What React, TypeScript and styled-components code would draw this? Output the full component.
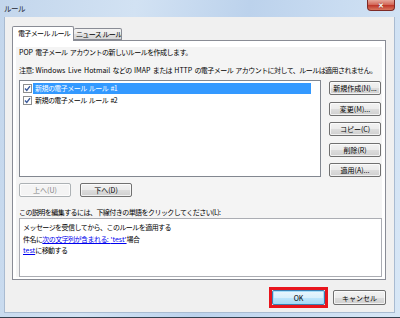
import styled, { createGlobalStyle } from "styled-components";

const GlobalStyle = createGlobalStyle`
  html, body {
    margin: 0;
    padding: 0;
    background: #ffffff;
  }
  body {
    font-family: "Noto Sans CJK JP", "Noto Sans", sans-serif;
  }
`;

const rules = [
  { id: 1, name: "新規の電子メール ルール #1", selected: true },
  { id: 2, name: "新規の電子メール ルール #2", selected: false },
];

const sideButtons = ["新規作成(N)...", "変更(M)...", "コピー(C)", "削除(R)", "適用(A)..."];

const CheckIcon = () => (
  <svg width="9" height="9" viewBox="0 0 9 9">
    <rect x="0.5" y="0.5" width="8" height="8" fill="#fff" stroke="#8e8f8f" />
    <path d="M2 4.5 L3.8 6.4 L7 2.2" fill="none" stroke="#3b5a9a" strokeWidth="1.4" />
  </svg>
);

const App = () => {
  return (
    <>
      <GlobalStyle />
      <Window>
        <TitleBar>
          <Title>ルール</Title>
          <CloseButton>✕</CloseButton>
        </TitleBar>
        <Client>
          <Tabs>
            <Tab $active>電子メール ルール</Tab>
            <Tab>ニュース ルール</Tab>
          </Tabs>
          <Panel>
            <Inner>
              <Line>
                <Latin>POP</Latin> 電子メール アカウントの新しいルールを作成します。
              </Line>
              <Note>
                注意: <Latin>Windows Live Hotmail</Latin> などの <Latin>IMAP</Latin> または{" "}
                <Latin>HTTP</Latin> の電子メール アカウントに対して、ルールは適用されません。
              </Note>
              <ListRow>
                <RuleList>
                  {rules.map((rule) => (
                    <RuleItem key={rule.id}>
                      <CheckIcon />
                      <RuleName $selected={rule.selected}>{rule.name}</RuleName>
                    </RuleItem>
                  ))}
                </RuleList>
                <SideButtons>
                  {sideButtons.map((label) => (
                    <Button key={label}>{label}</Button>
                  ))}
                </SideButtons>
              </ListRow>
              <MoveRow>
                <Button $disabled>上へ(U)</Button>
                <Button>下へ(D)</Button>
              </MoveRow>
              <Line>この説明を編集するには、下線付きの単語をクリックしてください(L):</Line>
              <Description>
                <DescLine>メッセージを受信してから、このルールを適用する</DescLine>
                <DescLine>
                  件名に<Link>次の文字列が含まれる: <Latin>'test'</Latin></Link>場合
                </DescLine>
                <DescLine>
                  <Link>
                    <Latin>test</Latin>
                  </Link>
                  に移動する
                </DescLine>
              </Description>
            </Inner>
          </Panel>
          <Footer>
            <Highlight>
              <Button $default $wide>
                OK
              </Button>
            </Highlight>
            <Button $wide>キャンセル</Button>
          </Footer>
        </Client>
      </Window>
    </>
  );
};

export default App;

const Window = styled.div`
  width: 400px;
  height: 318px;
  box-sizing: border-box;
  display: flex;
  flex-direction: column;
  background: linear-gradient(
    100deg,
    #c3d6ec 0%,
    #d2e2f3 30%,
    #bcd2ec 55%,
    #c9dcf1 75%,
    #d8e7f6 100%
  );
  border-bottom: 1px solid #34414f;
  font-family: "Noto Sans CJK JP", "Noto Sans", sans-serif;
  font-size: 7px;
  letter-spacing: -0.55px;
  word-spacing: 1.2px;
  color: #000;
`;

const Latin = styled.span`
  letter-spacing: 0;
`;

const TitleBar = styled.div`
  height: 17px;
  flex-shrink: 0;
  display: flex;
  justify-content: space-between;
  align-items: flex-start;
  padding: 0 5px 0 4px;
`;

const Title = styled.span`
  line-height: 17px;
  font-size: 7.5px;
  color: #1e2633;
`;

const CloseButton = styled.div`
  width: 28px;
  height: 11px;
  box-sizing: border-box;
  border: 1px solid #7d2a26;
  border-top: none;
  border-radius: 0 0 4px 4px;
  background: linear-gradient(#e6a89b 0%, #d46a5b 45%, #c0392b 55%, #d9775f 100%);
  color: #fff;
  font-size: 7px;
  font-weight: bold;
  letter-spacing: 0;
  line-height: 10px;
  text-align: center;
  text-shadow: 0 0 1px #5a1a14;
`;

const Client = styled.div`
  flex: 1;
  margin: 0 5px 4px 4px;
  background: #f0f0f0;
  border: 1px solid #a9bbd1;
  border-top: none;
  display: flex;
  flex-direction: column;
  padding: 9px 8px 7px 7px;
`;

const Tabs = styled.div`
  height: 14px;
  display: flex;
  align-items: flex-end;
  position: relative;
  z-index: 1;
`;

const Tab = styled.div<{ $active?: boolean }>`
  box-sizing: border-box;
  height: ${(p) => (p.$active ? "15px" : "12px")};
  margin-bottom: ${(p) => (p.$active ? "-1px" : "0")};
  width: ${(p) => (p.$active ? "62px" : "48px")};
  padding-left: ${(p) => (p.$active ? "5px" : "2px")};
  border: 1px solid #898c95;
  border-bottom: ${(p) => (p.$active ? "none" : "1px solid #898c95")};
  border-left: ${(p) => (p.$active ? "1px solid #898c95" : "none")};
  border-radius: 2px 2px 0 0;
  background: ${(p) =>
    p.$active ? "#ffffff" : "linear-gradient(#f3f3f3 0%, #ebebeb 50%, #dedede 50%, #d8d8d8 100%)"};
  line-height: ${(p) => (p.$active ? "13px" : "10px")};
  white-space: nowrap;
  overflow: hidden;
  letter-spacing: -0.65px;
  word-spacing: 0.5px;
`;

const Panel = styled.div`
  height: 240px;
  box-sizing: border-box;
  border: 1px solid #898c95;
  background: #ffffff;
  padding: 6px 4px 2px 3px;
  display: flex;
`;

const Inner = styled.div`
  flex: 1;
  background: #f4f4f4;
  padding: 0 0 0 3px;
  display: flex;
  flex-direction: column;
`;

const Line = styled.div`
  height: 10px;
  line-height: 10px;
  white-space: nowrap;
`;

const Note = styled(Line)`
  margin-top: 8px;
`;

const ListRow = styled.div`
  margin-top: 5px;
  display: flex;
  gap: 8px;
`;

const RuleList = styled.div`
  width: 302px;
  height: 97px;
  box-sizing: border-box;
  border: 1px solid #828790;
  background: #ffffff;
  padding: 1px 0 0 3px;
`;

const RuleItem = styled.div`
  height: 12px;
  display: flex;
  align-items: center;
  gap: 1px;
`;

const RuleName = styled.div<{ $selected?: boolean }>`
  width: 276px;
  height: 11px;
  line-height: 11px;
  padding-left: 2px;
  background: ${(p) => (p.$selected ? "#3399ff" : "transparent")};
  color: ${(p) => (p.$selected ? "#ffffff" : "#000000")};
  white-space: nowrap;
`;

const SideButtons = styled.div`
  display: flex;
  flex-direction: column;
  gap: 6.5px;
  padding-top: 1px;
`;

const Button = styled.button<{ $disabled?: boolean; $default?: boolean; $wide?: boolean }>`
  box-sizing: border-box;
  width: ${(p) => (p.$wide ? "53px" : "52px")};
  height: ${(p) => (p.$wide ? "15px" : "14px")};
  margin: 0;
  padding: 0;
  border: 1px solid
    ${(p) => (p.$disabled ? "#adb2b5" : p.$default ? "#3c7fb1" : "#707070")};
  border-radius: 2px;
  background: ${(p) =>
    p.$disabled
      ? "#f4f4f4"
      : p.$default
        ? "linear-gradient(#eaf6fd 0%, #d9f0fc 50%, #bee6fd 50%, #a7d9f5 100%)"
        : "linear-gradient(#f2f2f2 0%, #ebebeb 50%, #dddddd 50%, #cfcfcf 100%)"};
  box-shadow: inset 0 0 0 1px
    ${(p) => (p.$default ? "rgba(160, 220, 250, 0.9)" : "rgba(255, 255, 255, 0.7)")};
  font-family: inherit;
  font-size: 7px;
  letter-spacing: 0;
  line-height: 12px;
  color: ${(p) => (p.$disabled ? "#838383" : "#000000")};
  white-space: nowrap;
`;

const MoveRow = styled.div`
  margin-top: 6px;
  margin-bottom: 10px;
  display: flex;
  gap: 9px;
`;

const Description = styled.div`
  margin-top: 1px;
  width: 363px;
  height: 59px;
  box-sizing: border-box;
  border: 1px solid #abadb3;
  background: #ffffff;
  padding: 3px 0 0 3px;
`;

const DescLine = styled.div`
  height: 11.5px;
  line-height: 11.5px;
  white-space: nowrap;
`;

const Link = styled.span`
  color: #0000ee;
  text-decoration: underline;
`;

const Footer = styled.div`
  margin-top: 10px;
  height: 15px;
  display: flex;
  justify-content: flex-end;
  gap: 8px;
`;

const Highlight = styled.div`
  display: flex;
  outline: 3px solid #e8141c;
`;
